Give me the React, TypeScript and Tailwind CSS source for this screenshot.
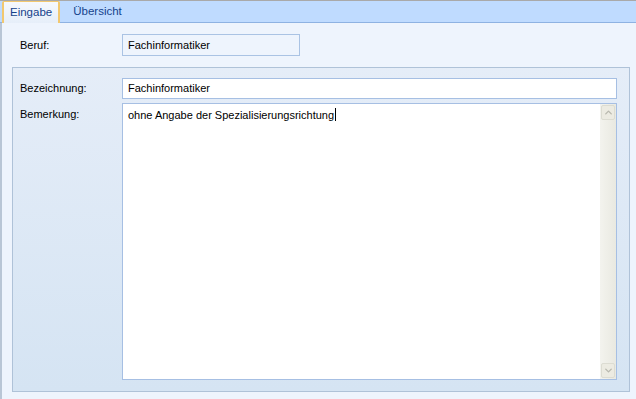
import { ChevronDown, ChevronUp } from "lucide-react";

const font = "font-['Liberation_Sans','Arial',sans-serif]";

export default function App() {
  return (
    <div
      className={`flex h-[399px] w-[636px] flex-col overflow-hidden bg-[#eef4fd] text-[11px] text-black ${font}`}
    >
      <TabBar />
      <main className="flex flex-1 flex-col border-l-2 border-l-[#b9c6d6] pl-[10px] pr-[6px]">
        <div className="flex h-[44px] items-center">
          <span className="w-[110px] pl-[8px]">Beruf:</span>
          <div className="flex h-[22px] w-[178px] items-center border border-[#aac3e4] bg-[#eef4fd] px-[5px]">
            Fachinformatiker
          </div>
        </div>
        <section className="mb-[7px] flex flex-1 flex-col gap-[4px] border border-[#afc2d8] bg-gradient-to-b from-[#e5edf8] to-[#d5e4f3] pb-[11px] pl-[7px] pr-[12px] pt-[10px]">
          <div className="flex items-center">
            <span className="w-[102px]">Bezeichnung:</span>
            <div className="flex h-[21px] flex-1 items-center border border-[#a6bfe3] bg-white px-[5px]">
              Fachinformatiker
            </div>
          </div>
          <div className="flex flex-1">
            <span className="w-[102px] pt-[3px]">Bemerkung:</span>
            <div className="flex flex-1 border border-[#a6bfe3] bg-white">
              <div className="flex-1 px-[5px] pt-[2px]">
                ohne Angabe der Spezialisierungsrichtung
                <span className="ml-px inline-block h-[13px] w-px translate-y-[2px] bg-black" />
              </div>
              <Scrollbar />
            </div>
          </div>
        </section>
      </main>
    </div>
  );
}

function TabBar() {
  return (
    <div className="flex h-[23px] items-end border-t border-t-[#a9a9a9] border-b border-b-[#8eb2e2] bg-[#bfdbff] pl-[2px]">
      <div className="-mb-px flex h-[22px] items-center rounded-t-[2px] border border-b-0 border-[#f2c870] border-x-2 bg-gradient-to-b from-[#f6f9fe] to-[#e6eef9] px-[6px] text-[11.5px] text-[#15428b]">
        Eingabe
      </div>
      <div className="flex h-[21px] items-center px-[13px] text-[11.5px] text-[#15428b]">
        Übersicht
      </div>
    </div>
  );
}

function Scrollbar() {
  return (
    <div className="flex w-[16px] flex-col justify-between bg-gradient-to-r from-[#f3f3ee] to-[#e9e9e1] p-px">
      <div className="flex h-[15px] items-center justify-center rounded-[2px] border border-[#dcdcd2] bg-[#ecebe2]">
        <ChevronUp className="h-[11px] w-[11px] text-[#b8b8ae]" strokeWidth={3} />
      </div>
      <div className="flex h-[15px] items-center justify-center rounded-[2px] border border-[#dcdcd2] bg-[#ecebe2]">
        <ChevronDown className="h-[11px] w-[11px] text-[#b8b8ae]" strokeWidth={3} />
      </div>
    </div>
  );
}
